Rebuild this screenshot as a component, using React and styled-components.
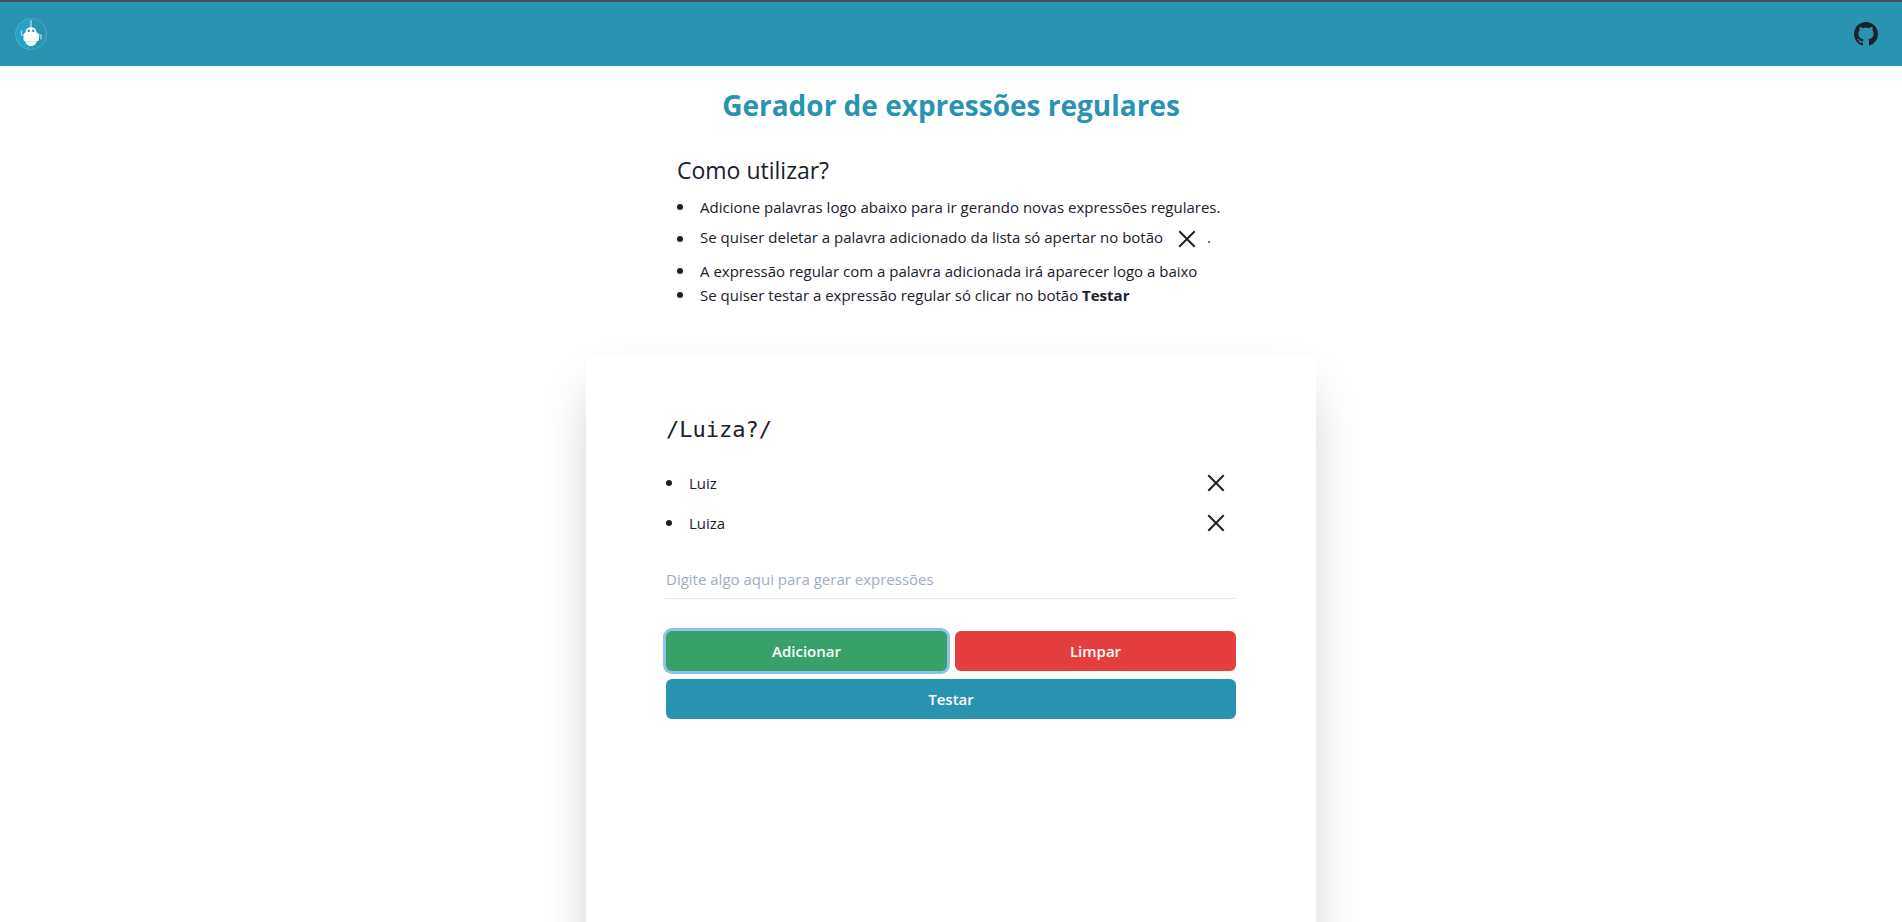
import React, { useState } from "react";
import styled, { createGlobalStyle } from "styled-components";
import { BsGithub } from "react-icons/bs";

const GlobalStyle = createGlobalStyle`
  *, *::before, *::after { box-sizing: border-box; }
  body {
    margin: 0;
    background: #fff;
    color: #1a202c;
    font-family: "Segoe UI", "Open Sans", "Noto Sans", sans-serif;
    font-size: 15px;
    line-height: 24px;
    overflow-x: hidden;
  }
  h1, h2, ul, p { margin: 0; padding: 0; }
  ul { list-style: none; }
`;

const Header = styled.header`
  display: flex;
  align-items: center;
  justify-content: space-between;
  height: 66px;
  padding: 0 24px 0 15px;
  background: #2994b2;
  border-top: 2px solid #41525c;
`;

const HeaderLink = styled.a`
  display: flex;
  color: #1a202c;
`;

const Main = styled.main`
  display: flex;
  flex-direction: column;
  align-items: center;
`;

const Title = styled.h1`
  margin-top: 20px;
  font-size: 28px;
  line-height: 38px;
  font-weight: 700;
  color: #2994b2;
`;

const Help = styled.section`
  width: 100%;
  max-width: 548px;
  margin: 29px 0 48px;
`;

const HelpTitle = styled.h2`
  margin-bottom: 8px;
  font-size: 23px;
  line-height: 34px;
  font-weight: 400;
`;

const Item = styled.li`
  display: flex;
  align-items: center;
  min-height: ${(p) => (p.$tall ? "40px" : "24px")};

  &::before {
    content: "";
    flex: none;
    width: 6px;
    height: 6px;
    margin-right: 17px;
    border-radius: 50%;
    background: currentColor;
  }
`;

const ItemText = styled.span`
  flex: ${(p) => (p.$grow ? 1 : "none")};
`;

const IconButton = styled.button`
  display: inline-flex;
  align-items: center;
  justify-content: center;
  width: 40px;
  height: 40px;
  padding: 0;
  border: 0;
  background: none;
  color: inherit;
  vertical-align: middle;
  cursor: pointer;
`;

const Card = styled.section`
  width: 100%;
  max-width: 730px;
  min-height: 640px;
  padding: 56px 80px;
  border-radius: 6px;
  background: #fff;
  box-shadow: 0 25px 50px -12px rgba(0, 0, 0, 0.25);
`;

const Regex = styled.p`
  margin-bottom: 14px;
  font-family: Consolas, "DejaVu Sans Mono", monospace;
  font-size: 22px;
  line-height: 38px;
`;

const Field = styled.input`
  display: block;
  width: 100%;
  height: 40px;
  margin: 16px 0 32px;
  padding: 0;
  border: 0;
  border-bottom: 1px solid #e2e8f0;
  outline: 0;
  background: none;
  color: inherit;
  font: inherit;

  &::placeholder { color: #a0aec0; opacity: 1; }
`;

const Actions = styled.div`
  display: grid;
  grid-template-columns: 1fr 1fr;
  gap: 8px;
`;

const Button = styled.button`
  grid-column: ${(p) => (p.$wide ? "1 / -1" : "auto")};
  height: 40px;
  border: 0;
  border-radius: 6px;
  background: ${(p) => p.$color};
  box-shadow: ${(p) => (p.$ring ? "0 0 0 3px rgba(66, 153, 225, 0.6)" : "none")};
  color: #fff;
  font: inherit;
  font-weight: 600;
  cursor: pointer;
`;

const CloseIcon = () => (
  <svg width="20" height="20" viewBox="0 0 20 20" fill="none" stroke="currentColor" strokeWidth="2" aria-hidden="true">
    <path d="M2.300 2.300 17.700 17.700M17.700 2.300 2.300 17.700" />
  </svg>
);

const Logo = () => (
  <svg width="32" height="32" viewBox="0 0 32 32" aria-hidden="true">
    <circle cx="16" cy="16" r="16" fill="#2994b2" />
    <path d="M16 0a16 16 0 0 0 0 32z" fill="#24a3c9" />
    <circle cx="16" cy="16" r="15.500" fill="none" stroke="#5fafc6" strokeWidth=".7" />
    <path d="M16 2v8M6.500 12.500v4.500h3M26 21.500v-4.500h-3" fill="none" stroke="#b9dfea" strokeWidth="1.200" />
    <path d="M10.500 14.500C10.500 7.500 21.500 7.500 21.500 14.500C23.500 15 24 16 24 17.500V21.500Q24 23 21.500 23.500C21 29.500 11 29.500 10.500 23.500Q8.500 23 8.500 21.500V17.500C8.500 16 9 15 10.500 14.500z" fill="#fff" />
    <path d="M11 23.500h10" stroke="#a9d8e6" strokeWidth=".6" />
    <circle cx="13.800" cy="12.800" r="1.200" fill="#2994b2" />
    <circle cx="18.200" cy="12.800" r="1.200" fill="#2994b2" />
  </svg>
);

export default function App() {
  const [words, setWords] = useState(["Luiz", "Luiza"]);
  const [text, setText] = useState("");
  const add = () => {
    if (text.trim()) setWords([...words, text.trim()]);
    setText("");
  };
  return (
    <>
      <GlobalStyle />
      <Header>
        <HeaderLink href="/" aria-label="Início"><Logo /></HeaderLink>
        <HeaderLink href="https://github.com" aria-label="GitHub"><BsGithub size={24} /></HeaderLink>
      </Header>
      <Main>
        <Title>Gerador de expressões regulares</Title>
        <Help>
          <HelpTitle>Como utilizar?</HelpTitle>
          <ul>
            <Item><ItemText>Adicione palavras logo abaixo para ir gerando novas expressões regulares.</ItemText></Item>
            <Item $tall>
              <ItemText>
                Se quiser deletar a palavra adicionado da lista só apertar no botão{" "}
                <IconButton type="button" aria-label="Exemplo do botão de remover"><CloseIcon /></IconButton>.
              </ItemText>
            </Item>
            <Item><ItemText>A expressão regular com a palavra adicionada irá aparecer logo a baixo</ItemText></Item>
            <Item><ItemText>Se quiser testar a expressão regular só clicar no botão <strong>Testar</strong></ItemText></Item>
          </ul>
        </Help>
        <Card>
          <Regex>/Luiza?/</Regex>
          <ul>
            {words.map((word, i) => (
              <Item $tall key={i}>
                <ItemText $grow>{word}</ItemText>
                <IconButton type="button" aria-label={`Remover ${word}`} onClick={() => setWords(words.filter((_, j) => j !== i))}>
                  <CloseIcon />
                </IconButton>
              </Item>
            ))}
          </ul>
          <Field
            aria-label="Palavra"
            placeholder="Digite algo aqui para gerar expressões"
            value={text}
            onChange={(e) => setText(e.target.value)}
          />
          <Actions>
            <Button type="button" $color="#38a169" $ring onClick={add}>Adicionar</Button>
            <Button type="button" $color="#e53e3e" onClick={() => setWords([])}>Limpar</Button>
            <Button type="button" $color="#2994b2" $wide>Testar</Button>
          </Actions>
        </Card>
      </Main>
    </>
  );
}
